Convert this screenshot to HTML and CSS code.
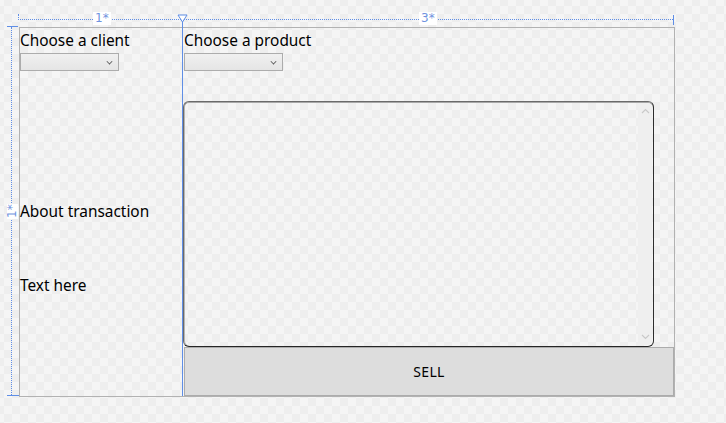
FILE: index.html
```html
<!DOCTYPE html>
<html>
<head>
<meta charset="utf-8">
<link rel="stylesheet" href="styles.css">
</head>
<body>
<div class="stage">
  <div class="form-grid">
    <div class="col col-left">
      <div class="label">Choose a client</div>
      <div class="combo"><span class="chev"></span></div>
      <div class="label about">About transaction</div>
      <div class="label texthere">Text here</div>
    </div>
    <div class="col col-right">
      <div class="label pad">Choose a product</div>
      <div class="combo pad-combo"><span class="chev"></span></div>
      <div class="textbox">
        <div class="scroll">
          <svg class="arrow up" width="9" height="6" viewBox="0 0 9 6"><path d="M1 5 L4.5 1.5 L8 5" fill="none" stroke="#c9c9c9" stroke-width="1.2"/></svg>
          <svg class="arrow down" width="9" height="6" viewBox="0 0 9 6"><path d="M1 1 L4.5 4.5 L8 1" fill="none" stroke="#c9c9c9" stroke-width="1.2"/></svg>
        </div>
      </div>
      <div class="sell">SELL</div>
    </div>
  </div>

  <div class="ruler-top">
    <span class="tick-left"></span>
    <span class="rlabel l1">1*</span>
    <span class="rlabel l3">3*</span>
    <svg class="split-marker" width="11" height="9" viewBox="0 0 11 9"><path d="M1 1 H10 L5.5 8 Z" fill="#ffffff" stroke="#5f8ee6" stroke-width="1"/></svg>
    <span class="tick-right"></span>
  </div>
  <div class="split-line"></div>
  <div class="ruler-left">
    <span class="htick top"></span>
    <span class="vlabel">1*</span>
    <span class="htick bottom"></span>
  </div>
</div>
</body>
</html>
```
FILE: styles.css
```css
html, body {
  margin: 0;
  padding: 0;
}
body {
  width: 726px;
  height: 423px;
  background-color: #f5f5f5;
  background-image:
    linear-gradient(45deg, #eeeeee 25%, transparent 25%, transparent 75%, #eeeeee 75%),
    linear-gradient(45deg, #eeeeee 25%, transparent 25%, transparent 75%, #eeeeee 75%);
  background-size: 16px 16px;
  background-position: 4px 6px, 12px 14px;
  font-family: "Noto Sans", "Open Sans", sans-serif;
  overflow: hidden;
}
.stage {
  position: relative;
  padding: 27px 0 0 19px;
}
.form-grid {
  width: 654px;
  height: 368px;
  border: 1px solid #b2b2b2;
  display: grid;
  grid-template-columns: 163px 491px;
}
.col {
  display: flex;
  flex-direction: column;
  align-items: flex-start;
}
.label {
  font-size: 15.4px;
  line-height: 20px;
  height: 20px;
  color: #000;
  white-space: nowrap;
  margin-top: 3px;
}
.col-right .label { margin-left: 1px; }
.combo {
  position: relative;
  margin-top: 2px;
  width: 97px;
  height: 16px;
  border: 1px solid #acacac;
  background: linear-gradient(#f0f0f0, #e5e5e5);
}
.pad-combo { margin-left: 1px; }
.chev {
  position: absolute;
  right: 6px;
  top: 5px;
  width: 4px;
  height: 4px;
  border-right: 1.4px solid #505050;
  border-bottom: 1.4px solid #505050;
  transform: rotate(45deg) scale(0.85);
}
.about { margin-top: 131px; }
.texthere { margin-top: 54px; }

.textbox {
  position: relative;
  margin-top: 30px;
  width: 469px;
  height: 244px;
  border: 1px solid #6a6a6a;
  border-right-color: #2e2e2e;
  border-bottom-color: #262626;
  border-radius: 6px;
  box-shadow: inset 0 1px 0 #a8a8a8, inset 1px 0 0 #b5b5b5;
}
.scroll {
  position: absolute;
  right: 1px;
  top: 1px;
  bottom: 1px;
  width: 14px;
  background: #efefef;
  border-radius: 0 5px 5px 0;
  display: flex;
  flex-direction: column;
  justify-content: space-between;
  align-items: center;
  padding: 5px 0;
  box-sizing: border-box;
}
.sell {
  margin-left: 1px;
  width: 488px;
  height: 47px;
  border: 1px solid #acacac;
  background: #dddddd;
  font-size: 14px;
  line-height: 47px;
  text-align: center;
  color: #000;
  letter-spacing: 0.3px;
}

/* designer adornments */
.ruler-top {
  position: absolute;
  left: 18px;
  top: 14px;
  width: 656px;
  height: 11px;
}
.ruler-top::before {
  content: "";
  position: absolute;
  left: 0;
  right: 1px;
  top: 5px;
  border-top: 1px dotted #5f8ee6;
}
.tick-left {
  position: absolute;
  left: 0;
  top: 0;
  height: 6px;
  border-left: 1px dotted #5f8ee6;
}
.tick-right {
  position: absolute;
  left: 655px;
  top: 1px;
  height: 10px;
  border-left: 1px solid #5f8ee6;
}
.rlabel {
  position: absolute;
  top: -2px;
  background: #fff;
  color: #6f93e0;
  font-size: 12px;
  line-height: 13px;
  padding: 0 2px;
  font-family: "DejaVu Sans", sans-serif;
}
.l1 { left: 75px; }
.l3 { left: 401px; }
.split-marker {
  position: absolute;
  left: 159px;
  top: 0;
}
.split-line {
  position: absolute;
  left: 182px;
  top: 22px;
  width: 1px;
  height: 374px;
  background: #5f8ee6;
}
.ruler-left {
  position: absolute;
  left: 7px;
  top: 26px;
  width: 13px;
  height: 370px;
}
.ruler-left::before {
  content: "";
  position: absolute;
  left: 4px;
  top: 1px;
  bottom: 1px;
  border-left: 1px dotted #5f8ee6;
}
.htick {
  position: absolute;
  left: 0;
  width: 12px;
  border-top: 1px solid #5f8ee6;
}
.htick.top { top: 0; width: 11px; }
.htick.bottom { top: 369px; }
.vlabel {
  position: absolute;
  left: 0;
  top: 178px;
  width: 11px;
  height: 15px;
  background: #fff;
  color: #6f93e0;
  font-size: 12px;
  line-height: 11px;
  font-family: "DejaVu Sans", sans-serif;
  writing-mode: vertical-rl;
  transform: rotate(180deg);
  text-align: center;
}
```
